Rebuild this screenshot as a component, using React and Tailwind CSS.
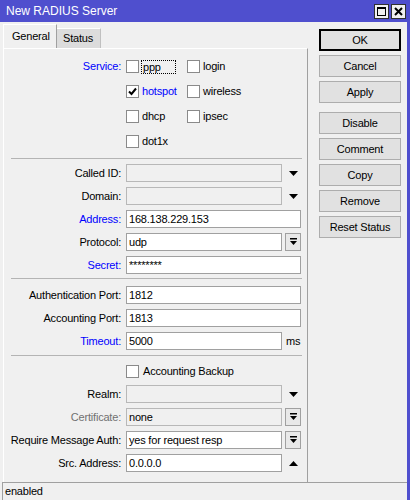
import React from "react";

const Check = ({ checked }) => (
  <div className="w-[13px] h-[13px] bg-white border border-[#8a8a8a] flex items-center justify-center shrink-0">
    {checked && (
      <svg width="9" height="9" viewBox="0 0 9 9">
        <path d="M1 4.5 L3.5 7 L8 1.5" stroke="#000" strokeWidth="2" fill="none" />
      </svg>
    )}
  </div>
);

const DownTri = () => (
  <svg width="9" height="5" viewBox="0 0 9 5">
    <path d="M0 0 H9 L4.5 5 Z" fill="#000" />
  </svg>
);
const UpTri = () => (
  <svg width="9" height="5" viewBox="0 0 9 5">
    <path d="M0 5 H9 L4.5 0 Z" fill="#000" />
  </svg>
);

const DropBtn = () => (
  <div className="ml-[3px] w-[16px] h-[18px] border border-[#a0a0a0] bg-[#e8e8e8] flex items-center justify-center">
    <svg width="7" height="8" viewBox="0 0 7 8">
      <rect x="0" y="0" width="7" height="1.5" fill="#000" />
      <path d="M0 3 H7 L3.5 7 Z" fill="#000" />
    </svg>
  </div>
);

const Field = ({ value, disabled, wide }) => (
  <div
    className={
      (wide ? "w-[175px] " : "w-[156px] ") +
      (disabled ? "bg-[#f0f0f0] border-[#b8b8b8] " : "bg-white border-[#a0a0a0] ") +
      "h-[18px] border flex items-center pl-[2px] text-black"
    }
  >
    {value}
  </div>
);

const Label = ({ children, color }) => (
  <div className={"w-[117px] text-right shrink-0 " + (color || "text-black")}>{children}</div>
);

const Row = ({ label, color, children }) => (
  <div className="flex items-center h-[18px]">
    <Label color={color}>{label}</Label>
    <div className="ml-[5px] flex items-center">{children}</div>
  </div>
);

const Sep = () => <div className="ml-[7px] mr-[5px] border-t border-[#b4b4b4]" />;

const Btn = ({ children, primary }) => (
  <div
    className={
      (primary ? "border-2 border-[#000] " : "border border-[#adadad] ") +
      "h-[22px] bg-[#e1e1e1] flex items-center justify-center text-black"
    }
  >
    {children}
  </div>
);

export default function App() {
  return (
    <div
      className="w-[410px] h-[500px] bg-[#f0f0f0] flex flex-col overflow-hidden text-[11px] tracking-[-0.2px] text-black"
      style={{ fontFamily: '"Liberation Sans", Arial, sans-serif' }}
    >
      {/* title bar */}
      <div className="h-[22px] bg-[#4f4fce] flex items-center pl-[6px] pr-[4px] shrink-0">
        <div className="text-white text-[12px] tracking-normal flex-1">New RADIUS Server</div>
        <div className="flex gap-[2px]">
          <div className="w-[15px] h-[15px] bg-[#f0f0f0] border border-[#303030] flex items-center justify-center">
            <div className="w-[9px] h-[9px] border border-[#000] border-t-2" />
          </div>
          <div className="w-[15px] h-[15px] bg-[#f0f0f0] border border-[#303030] flex items-center justify-center">
            <svg width="9" height="9" viewBox="0 0 9 9">
              <path d="M1 1 L8 8 M8 1 L1 8" stroke="#000" strokeWidth="2" />
            </svg>
          </div>
        </div>
      </div>

      <div className="flex-1 flex flex-col border-r-[3px] border-[#4f4fce]">
        <div className="flex-1 flex">
          {/* left */}
          <div className="ml-[3px] w-[305px] flex flex-col">
            <div className="h-[26px] flex items-end">
              <div className="h-[24px] w-[54px] border-l border-t border-white border-r border-r-[#a0a0a0] bg-[#f0f0f0] pl-[8px] flex items-center pb-[1px]">
                General
              </div>
              <div className="h-[20px] w-[44px] bg-[#dcdcdc] border-t border-r border-[#c0c0c0] border-t-white pl-[6px] flex items-center">
                Status
              </div>
            </div>
            <div className="flex-1 border-t border-l border-white border-r border-r-[#a0a0a0] flex flex-col">
              <div className="pt-[5px] flex flex-col">
                <div className="flex items-center h-[25px]">
                  <Label color="text-[#0000ff]">Service:</Label>
                  <div className="ml-[5px] w-[61px] flex items-center">
                    <Check />
                    <span className="ml-[2px] w-[35px] px-[1px] leading-[12px] border border-dotted border-black">ppp</span>
                  </div>
                  <div className="flex items-center">
                    <Check />
                    <span className="ml-[3px]">login</span>
                  </div>
                </div>
                <div className="flex items-center h-[25px]">
                  <div className="w-[117px]" />
                  <div className="ml-[5px] w-[61px] flex items-center">
                    <Check checked />
                    <span className="ml-[3px] text-[#0000ff]">hotspot</span>
                  </div>
                  <div className="flex items-center">
                    <Check />
                    <span className="ml-[3px]">wireless</span>
                  </div>
                </div>
                <div className="flex items-center h-[25px]">
                  <div className="w-[117px]" />
                  <div className="ml-[5px] w-[61px] flex items-center">
                    <Check />
                    <span className="ml-[3px]">dhcp</span>
                  </div>
                  <div className="flex items-center">
                    <Check />
                    <span className="ml-[3px]">ipsec</span>
                  </div>
                </div>
                <div className="flex items-center h-[25px]">
                  <div className="w-[117px]" />
                  <div className="ml-[5px] flex items-center">
                    <Check />
                    <span className="ml-[3px]">dot1x</span>
                  </div>
                </div>
              </div>

              <div className="mt-[4px]">
                <Sep />
              </div>

              <div className="mt-[5px] flex flex-col gap-[5px]">
                <Row label="Called ID:">
                  <Field disabled />
                  <div className="ml-[3px] w-[16px] flex justify-center">
                    <DownTri />
                  </div>
                </Row>
                <Row label="Domain:">
                  <Field disabled />
                  <div className="ml-[3px] w-[16px] flex justify-center">
                    <DownTri />
                  </div>
                </Row>
                <Row label="Address:" color="text-[#0000ff]">
                  <Field wide value="168.138.229.153" />
                </Row>
                <Row label="Protocol:">
                  <Field value="udp" />
                  <DropBtn />
                </Row>
                <Row label="Secret:" color="text-[#0000ff]">
                  <Field wide value="********" />
                </Row>
              </div>

              <div className="mt-[4px]">
                <Sep />
              </div>

              <div className="mt-[7px] flex flex-col gap-[5px]">
                <Row label="Authentication Port:">
                  <Field wide value="1812" />
                </Row>
                <Row label="Accounting Port:">
                  <Field wide value="1813" />
                </Row>
                <Row label="Timeout:" color="text-[#0000ff]">
                  <Field value="5000" />
                  <span className="ml-[4px]">ms</span>
                </Row>
              </div>

              <div className="mt-[5px]">
                <Sep />
              </div>

              <div className="mt-[6px] flex flex-col gap-[5px]">
                <div className="flex items-center h-[18px]">
                  <div className="w-[117px]" />
                  <div className="ml-[5px] flex items-center">
                    <Check />
                    <span className="ml-[4px]">Accounting Backup</span>
                  </div>
                </div>
                <Row label="Realm:">
                  <Field disabled />
                  <div className="ml-[3px] w-[16px] flex justify-center">
                    <DownTri />
                  </div>
                </Row>
                <Row label="Certificate:" color="text-[#707070]">
                  <Field disabled value="none" />
                  <DropBtn />
                </Row>
                <Row label="Require Message Auth:">
                  <Field value="yes for request resp" />
                  <DropBtn />
                </Row>
                <Row label="Src. Address:">
                  <Field value="0.0.0.0" />
                  <div className="ml-[3px] w-[16px] flex justify-center">
                    <UpTri />
                  </div>
                </Row>
              </div>
            </div>
          </div>

          {/* right buttons */}
          <div className="ml-[11px] mt-[7px] w-[82px] flex flex-col gap-[4px]">
            <Btn primary>OK</Btn>
            <Btn>Cancel</Btn>
            <Btn>Apply</Btn>
            <div className="mt-[5px]">
              <Btn>Disable</Btn>
            </div>
            <Btn>Comment</Btn>
            <Btn>Copy</Btn>
            <Btn>Remove</Btn>
            <Btn>Reset Status</Btn>
          </div>
        </div>

        {/* status bar */}
        <div className="h-[18px] ml-[2px] border-t border-l border-[#a0a0a0] flex items-center pl-[2px] shrink-0">
          enabled
        </div>
      </div>
    </div>
  );
}
